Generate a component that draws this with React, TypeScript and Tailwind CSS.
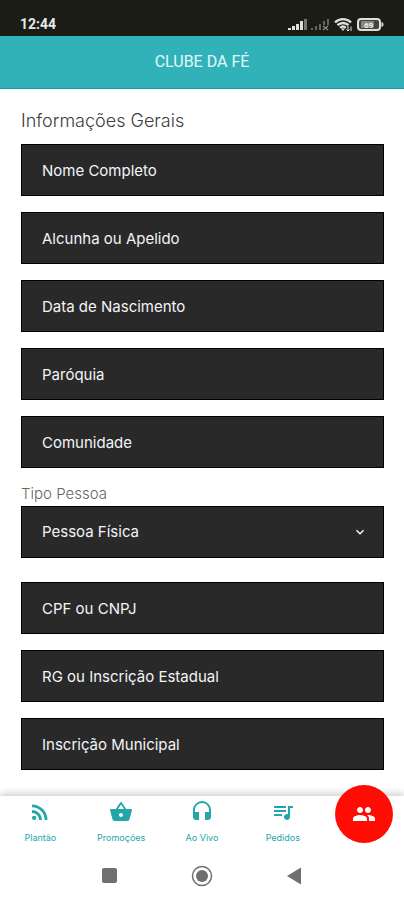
import React from 'react';
import { MdHeadset, MdKeyboardArrowDown, MdPeople, MdQueueMusic, MdRssFeed, MdShoppingBasket } from 'react-icons/md';

const generalFields = [
  { id: 'nome', label: 'Nome Completo' },
  { id: 'alcunha', label: 'Alcunha ou Apelido' },
  { id: 'nascimento', label: 'Data de Nascimento' },
  { id: 'paroquia', label: 'Paróquia' },
  { id: 'comunidade', label: 'Comunidade' },
];

const documentFields = [
  { id: 'documento', label: 'CPF ou CNPJ' },
  { id: 'rg', label: 'RG ou Inscrição Estadual' },
  { id: 'municipal', label: 'Inscrição Municipal' },
];

const tabs = [
  { label: 'Plantão', icon: MdRssFeed },
  { label: 'Promoções', icon: MdShoppingBasket },
  { label: 'Ao Vivo', icon: MdHeadset },
  { label: 'Pedidos', icon: MdQueueMusic },
];

const fieldClass =
  'block w-full h-[52px] px-5 bg-[#292929] border border-black rounded-none text-[15px] text-gray-100 placeholder:text-gray-100 placeholder:opacity-100 outline-none';

const Field: React.FC<{ id: string; label: string }> = ({ id, label }) => (
  <input id={id} type="text" aria-label={label} placeholder={label} className={fieldClass} />
);

const StatusBar: React.FC = () => (
  <div className="flex h-9 items-end justify-between bg-[#1c1c17] px-5 pb-0.5 font-['Roboto',sans-serif]">
    <span className="text-sm font-bold text-gray-200">12:44</span>
    <div className="flex h-5 items-center gap-1">
      <svg width="19" height="13" viewBox="0 0 19 13" fill="#dededb" aria-hidden="true">
        <rect x="0" y="10" width="3" height="2" />
        <rect x="4" y="8" width="3" height="4" />
        <rect x="8" y="6" width="3" height="6" />
        <rect x="12" y="3" width="3" height="9" />
        <rect x="16" y="1" width="3" height="11" fill="#77776f" />
      </svg>
      <svg width="19" height="13" viewBox="0 0 19 13" fill="#66665f" aria-hidden="true">
        <rect x="0" y="10" width="2" height="2" />
        <rect x="4" y="8" width="2" height="4" />
        <rect x="8" y="6" width="2" height="6" />
        <rect x="12" y="3" width="2" height="4" />
        <rect x="16" y="1" width="2" height="6" />
        <path d="M12 8l5 4M17 8l-5 4" stroke="#88887f" strokeWidth="1.4" />
      </svg>
      <svg width="19" height="15" viewBox="0 0 19 15" fill="none" stroke="#dededb" strokeWidth="2.4" aria-hidden="true">
        <path d="M1 5.5C5.5 1 12.500 1 17 5.500M3.500 8.200c3.200-3 7.800-3 11 0M6.200 10.800c1.700-1.500 3.900-1.500 5.600 0" />
        <path d="M7 11.500h4L9 14z" fill="#dededb" stroke="none" />
        <path d="M14 9v5M12.500 12.500l1.500 1.500 1.500-1.500M17 14V9.500" strokeWidth="1" />
      </svg>
      <svg width="27" height="13" viewBox="0 0 27 13" aria-hidden="true">
        <rect x="1" y="1" width="22" height="11" rx="3" fill="#44443e" stroke="#dededb" strokeWidth="2" />
        <path d="M24.500 4c1.500.5 2 1.300 2 2.500s-.5 2-2 2.500z" fill="#dededb" />
        <rect x="4" y="3" width="13" height="7" rx="1" fill="#88887f" />
        <text x="7" y="10" fontSize="8" fontWeight="700" fill="#f2f2ee">69</text>
      </svg>
    </div>
  </div>
);

const TabBar: React.FC = () => (
  <nav className="grid grid-cols-5 h-14 bg-white shadow-[0_-2px_8px_rgba(0,0,0,0.22)]">
    {tabs.map(({ label, icon: Icon }) => (
      <a key={label} href="#" className="flex flex-col items-center pt-1 text-[#22a6a9]">
        <Icon className="h-6 w-6" />
        <span className="mt-2 text-[9px] leading-3">{label}</span>
      </a>
    ))}
    <div className="relative">
      <button
        type="button"
        aria-label="Clube"
        className="absolute -top-[11px] left-1/2 flex h-[58px] w-[58px] -translate-x-1/2 items-center justify-center rounded-full bg-[#ff0d05] text-white"
      >
        <MdPeople className="h-6 w-6" />
      </button>
    </div>
  </nav>
);

const SystemBar: React.FC = () => (
  <div className="flex h-12 items-center justify-center gap-[70px] bg-white text-[#6f6f6f]">
    <button type="button" aria-label="Recentes">
      <svg width="24" height="24" viewBox="0 0 24 24" fill="currentColor">
        <rect x="5" y="4" width="15" height="15" rx="2" />
      </svg>
    </button>
    <button type="button" aria-label="Início">
      <svg width="22" height="24" viewBox="0 0 22 24" fill="currentColor">
        <circle cx="11" cy="12" r="9.500" fill="none" stroke="currentColor" strokeWidth="1.5" />
        <circle cx="11" cy="12" r="6" />
      </svg>
    </button>
    <button type="button" aria-label="Voltar">
      <svg width="24" height="24" viewBox="0 0 24 24" fill="currentColor">
        <path d="M18 3.500v17L4 12z" />
      </svg>
    </button>
  </div>
);

const App: React.FC = () => (
  <div className="flex min-h-screen flex-col bg-white font-['Inter','Noto_Sans',sans-serif]">
    <StatusBar />
    <header className="flex h-[53px] items-center justify-center border-b border-[#179c9f] bg-[#30b2b8]">
      <h1 className="font-['Roboto',sans-serif] text-base text-[#e2fafa]">CLUBE DA FÉ</h1>
    </header>

    <main className="flex-1 px-5 pt-5">
      <form className="pl-px">
        <h2 className="mb-[11px] text-lg leading-6 font-light text-[#3c3c3c]">Informações Gerais</h2>
        <div className="flex flex-col gap-4">
          {generalFields.map((field) => (
            <Field key={field.id} {...field} />
          ))}
        </div>

        <label htmlFor="tipo" className="mt-4 block pb-0.5 text-[15px] leading-5 font-light text-[#666]">
          Tipo Pessoa
        </label>
        <div className="relative mb-6">
          <select id="tipo" className={`${fieldClass} appearance-none`}>
            <option>Pessoa Física</option>
            <option>Pessoa Jurídica</option>
          </select>
          <MdKeyboardArrowDown className="pointer-events-none absolute top-[18px] right-4 h-4 w-4 text-white" />
        </div>

        <div className="flex flex-col gap-4">
          {documentFields.map((field) => (
            <Field key={field.id} {...field} />
          ))}
        </div>
      </form>
    </main>

    <TabBar />
    <SystemBar />
  </div>
);

export default App;
